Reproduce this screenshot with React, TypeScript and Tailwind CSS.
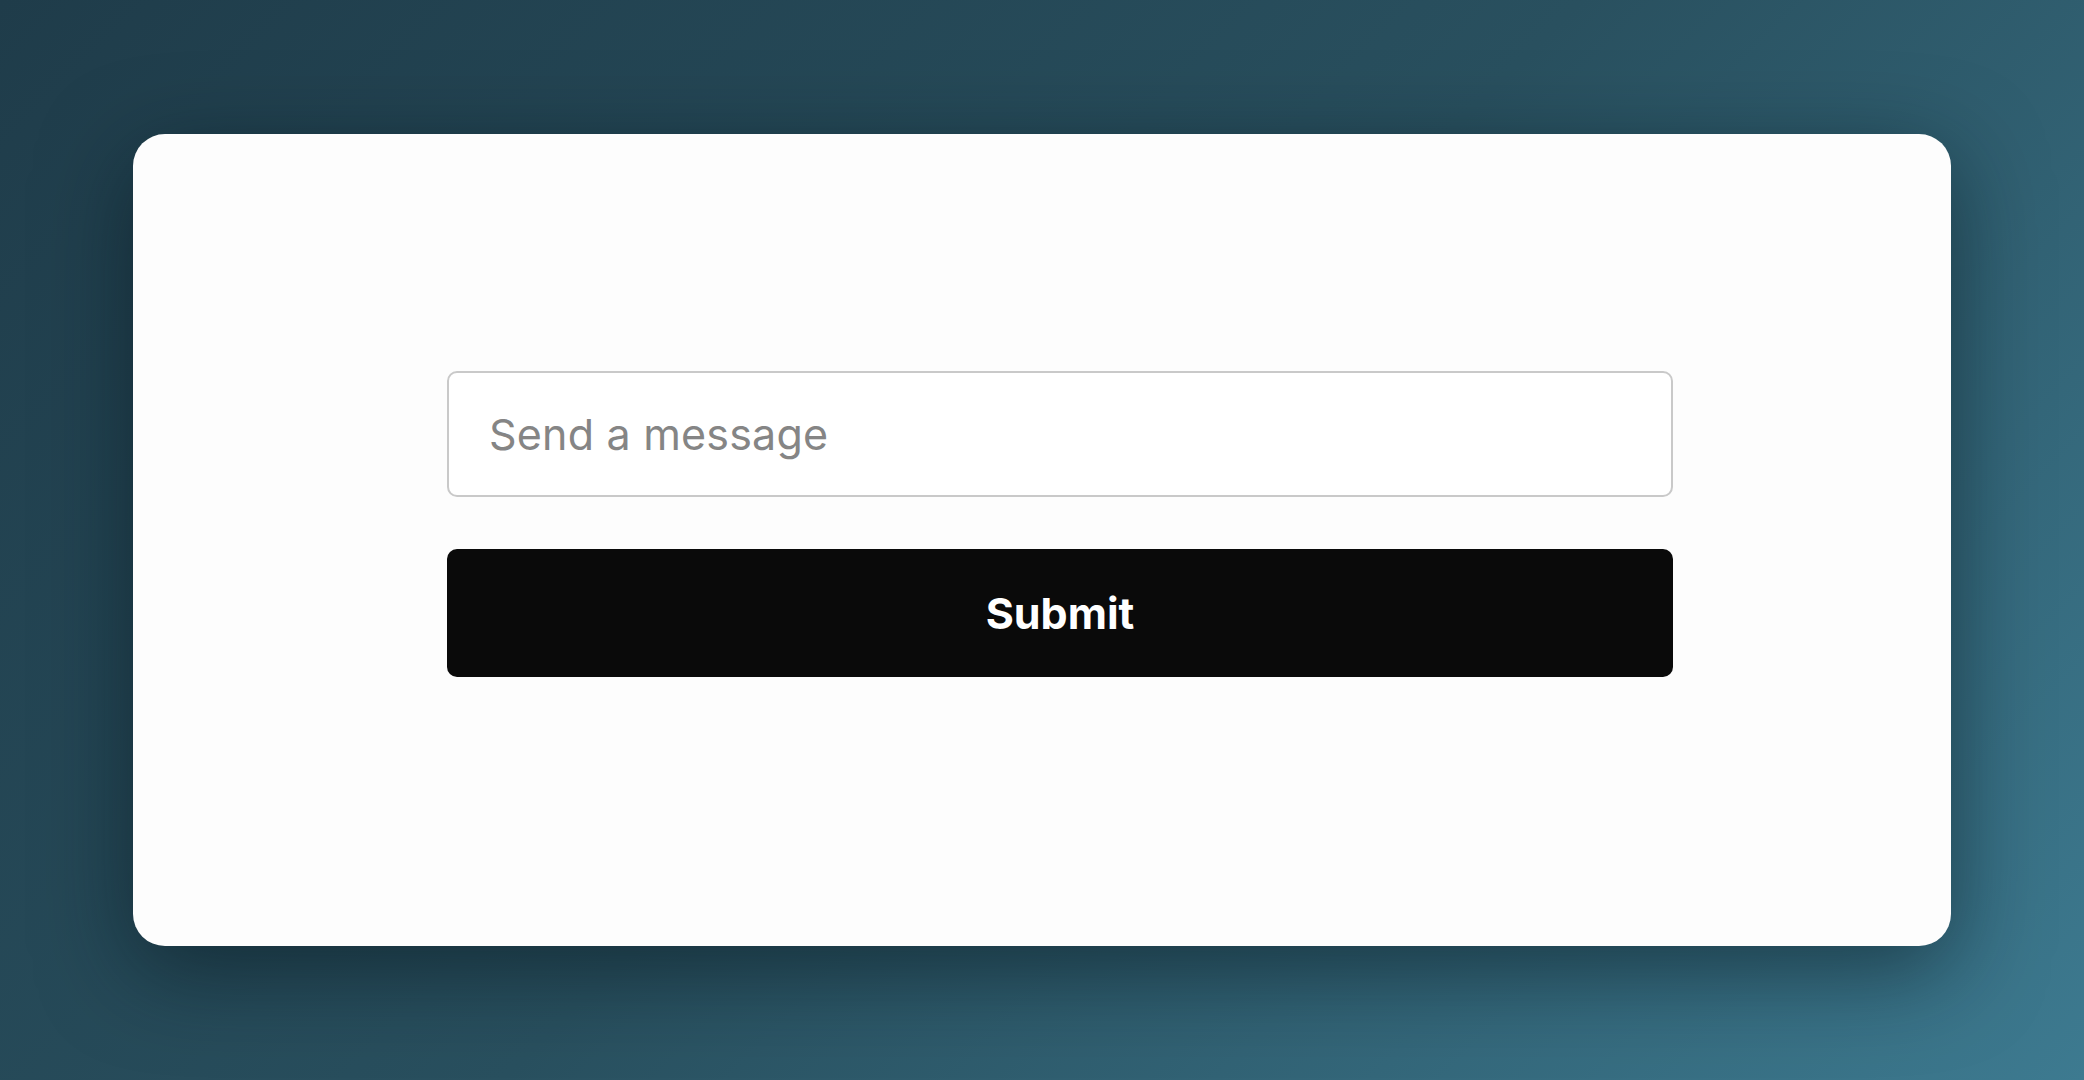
import React, { useState } from 'react';

export default function App() {
  const [message, setMessage] = useState('');

  return (
    <div className="w-[2084px] h-[1080px] overflow-hidden bg-[linear-gradient(135deg,#1f3c4a_0%,#29505f_50%,#3d7a90_100%)] pt-[134px] pl-[133px]">
      {/* Card */}
      <div className="w-[1818px] h-[812px] bg-[#fdfdfd] rounded-[32px] shadow-[0_24px_90px_rgba(5,20,28,0.55)] pl-[314px] pt-[237px]">
        <form
          className="w-[1226px] flex flex-col gap-[52px]"
          style={{ fontFamily: 'Inter, "Liberation Sans", Arial, sans-serif' }}
          onSubmit={(e) => e.preventDefault()}
        >
          <input
            type="text"
            value={message}
            onChange={(e) => setMessage(e.target.value)}
            placeholder="Send a message"
            className="w-full h-[126px] bg-white border-2 border-[#c9c9c9] rounded-[10px] pl-[40px] pr-6 text-[43px] tracking-[0.2px] text-[#222] placeholder:text-[#858585] outline-none"
          />
          <button
            type="submit"
            className="w-full h-[128px] bg-[#0a0a0a] rounded-[10px] text-white text-[43px] font-bold"
          >
            Submit
          </button>
        </form>
      </div>
    </div>
  );
}
